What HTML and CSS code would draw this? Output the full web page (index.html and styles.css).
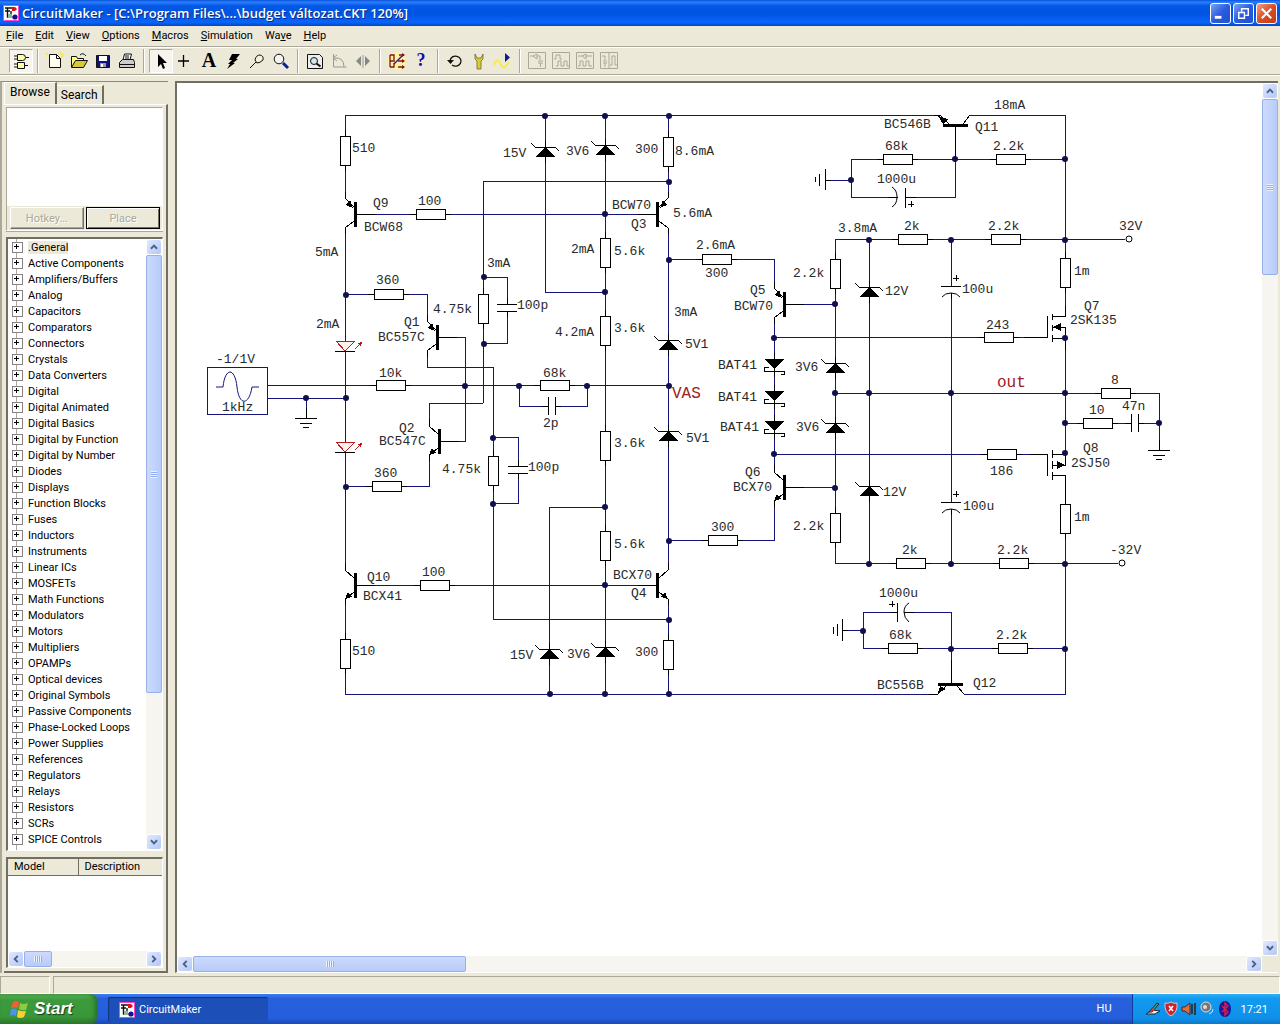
FILE: index.html
```html
<!DOCTYPE html>
<html lang="en">
<head>
<meta charset="utf-8">
<title>CircuitMaker - budget változat.CKT</title>
<link rel="stylesheet" href="styles.css">
</head>
<body>
<svg class="defs" aria-hidden="true">
  <defs>
    <symbol id="app" viewBox="0 0 16 16">
      <rect width="16" height="16" fill="#fff"/><rect x=".5" y=".5" width="15" height="15" fill="none" stroke="#f4c"/>
      <path d="M2 3h8M2 6h5M4.500 3v9h5M8 6v3" stroke="#111" fill="none" stroke-width="1.400"/>
      <path d="M9 2h3l2 2-2 2H9z" fill="#d11"/><circle cx="12" cy="12" r="2.600" fill="#118"/><path d="M5 9h4v4H5z" fill="#8cb89a"/>
    </symbol>
    <symbol id="a-up" viewBox="0 0 16 16"><path d="M4.500 10L8 6.500l3.500 3.500" fill="none" stroke="#4d6185" stroke-width="2.200"/></symbol>
    <symbol id="a-down" viewBox="0 0 16 16"><path d="M4.500 6L8 9.500 11.500 6" fill="none" stroke="#4d6185" stroke-width="2.200"/></symbol>
    <symbol id="a-left" viewBox="0 0 16 16"><path d="M10 4.500L6.500 8l3.500 3.500" fill="none" stroke="#4d6185" stroke-width="2.200"/></symbol>
    <symbol id="a-right" viewBox="0 0 16 16"><path d="M6 4.500L9.500 8 6 11.500" fill="none" stroke="#4d6185" stroke-width="2.200"/></symbol>
  </defs>
</svg>

<header class="titlebar">
  <svg class="app-icon" aria-hidden="true"><use href="#app"/></svg>
  <h1>CircuitMaker - [C:\Program Files\...\budget változat.CKT 120%]</h1>
  <div class="window-buttons">
    <button aria-label="Minimize"><svg viewBox="0 0 20 20"><path d="M4 14h7" stroke="#fff" stroke-width="3"/></svg></button>
    <button aria-label="Restore"><svg viewBox="0 0 20 20"><path d="M8 8V5h7v7h-3M5 9h6v6H5z" fill="none" stroke="#fff" stroke-width="1.500"/></svg></button>
    <button class="close" aria-label="Close"><svg viewBox="0 0 20 20"><path d="M5 5l10 10M15 5L5 15" stroke="#fff" stroke-width="2.200"/></svg></button>
  </div>
</header>

<nav class="menubar">
  <button><u>F</u>ile</button><button><u>E</u>dit</button><button><u>V</u>iew</button><button><u>O</u>ptions</button><button><u>M</u>acros</button><button><u>S</u>imulation</button><button>Wa<u>v</u>e</button><button><u>H</u>elp</button>
</nav>

<div class="toolbar" role="toolbar">
  <button class="on" aria-label="Parts panel"><svg viewBox="0 0 20 20"><g fill="#ffffa8" stroke="#111"><path d="M6.500 3.500h5q3 0 3 3t-3 3h-5zM6.500 11.500h7v6h-7z"/></g><path d="M3 5h3M3 8h3M15 6.500h3M3 13h3M3 16h3M14 14.500h3" stroke="#111"/></svg></button>
  <span class="sep"></span>
  <button aria-label="New"><svg viewBox="0 0 20 20"><path d="M14 1l4 3-2 3M3 2l-2 2" fill="none" stroke="#ee5" stroke-width="2"/><path d="M4.500 3.500h7l4 4v9h-11z" fill="#fffff0" stroke="#111"/><path d="M11.500 3.500v4h4" fill="none" stroke="#111"/></svg></button>
  <button aria-label="Open"><svg viewBox="0 0 20 20"><path d="M2.500 16V5.500h5l1 2h6V10" fill="#ffff80" stroke="#111"/><path d="M2.500 16.500l4-7h12l-4 7z" fill="#d8c83c" stroke="#111"/><path d="M11 4q3-3 6 1" fill="none" stroke="#111"/></svg></button>
  <button aria-label="Save"><svg viewBox="0 0 20 20"><path d="M3.500 4.500h13v12h-13z" fill="#10107a" stroke="#111"/><path d="M6 5h8v5H6z" fill="#fff"/><path d="M7 12h6v4H7z" fill="#999"/><path d="M8 13h2v3H8z" fill="#fff"/></svg></button>
  <button aria-label="Print"><svg viewBox="0 0 20 20"><path d="M6 9l1.500-6h7L13 9" fill="#fff" stroke="#111"/><path d="M8 5h4M8 7h4" stroke="#111"/><path d="M2.500 11.500l3-3h11l1 3v5h-15z" fill="#ccc" stroke="#111"/><path d="M3 13.500h14" stroke="#111"/></svg></button>
  <span class="sep"></span>
  <button class="on" aria-label="Select"><svg viewBox="0 0 20 20"><path d="M7 3v13l3-3 2 5 2-1-2-5h4z" fill="#000"/></svg></button>
  <button aria-label="Wire"><svg viewBox="0 0 20 20"><path d="M3 10h11M8.500 4v12" stroke="#000" stroke-width="1.300"/></svg></button>
  <button aria-label="Text" class="glyph">A</button>
  <button aria-label="Delete"><svg viewBox="0 0 20 20"><path d="M9 3h8l-4 5h2l-5 4h2l-8 6 3-5H5l4-4H6z" fill="#000"/></svg></button>
  <button aria-label="Probe"><svg viewBox="0 0 20 20"><path d="M3 17l6-6M8 9q1-5 5-5 4 1 3 5-3 3-6 3z" fill="#f4f0dc" stroke="#111"/></svg></button>
  <button aria-label="Zoom"><svg viewBox="0 0 20 20"><circle cx="8" cy="8" r="4.800" fill="#f4f4f0" stroke="#111"/><path d="M12 12l5 5" stroke="#102090" stroke-width="3"/></svg></button>
  <span class="sep"></span>
  <button aria-label="Fit"><svg viewBox="0 0 20 20"><path d="M2.500 3.500h12l3 3v11h-15z" fill="#eee" stroke="#111"/><circle cx="9" cy="10" r="3.500" fill="#cfe8e8" stroke="#111"/><path d="M11.500 12.500l4 3" stroke="#111" stroke-width="2"/></svg></button>
  <button aria-label="Rotate" disabled><svg viewBox="0 0 20 20"><g fill="none" stroke="#999"><path d="M4.500 3v13h13M4 7l4-3M4 7l4 3M5 7q10-1 10 9"/></g></svg></button>
  <button aria-label="Mirror" disabled><svg viewBox="0 0 20 20"><path d="M8 5v10l-5-5zM12 5v10l5-5z" fill="#888"/><path d="M10 4v13" stroke="#999"/></svg></button>
  <span class="sep"></span>
  <button aria-label="Digital options"><svg viewBox="0 0 20 20"><circle cx="10" cy="10" r="9" fill="#fff3a0"/><path d="M3 4h4v5M3 16h4v-4M3 4v12M3 10h5M11 16h6M11 10h6M12 4h5" fill="none" stroke="#811" stroke-width="1.300"/><path d="M7 13l8-8" stroke="#22a" stroke-width="1.500"/><path d="M15 2l3 2-3 2zM15 8l3 2-3 2zM15 14l3 2-3 2z" fill="#811"/></svg></button>
  <button aria-label="Help" class="glyph help">?</button>
  <span class="sep"></span>
  <button aria-label="Reset"><svg viewBox="0 0 20 20"><path d="M5 10a5.500 5 0 1 1 2 4" fill="none" stroke="#111" stroke-width="1.300"/><path d="M2 9h7l-3.500 4z" fill="#111"/></svg></button>
  <button aria-label="Step"><svg viewBox="0 0 20 20"><path d="M6 3v5l2 2v8h4v-8l2-2V3l-2 4H8z" fill="#d8d020" stroke="#665" stroke-width=".8"/></svg></button>
  <button aria-label="Run"><svg viewBox="0 0 20 20"><path d="M1 14q3-8 6-2t5 4l4-5" fill="none" stroke="#f4ec50" stroke-width="2"/><path d="M12 2v9l5-4.500z" fill="#102080"/></svg></button>
  <span class="sep"></span>
  <button aria-label="Trace" disabled><svg viewBox="0 0 20 20"><g fill="none" stroke="#aaa897"><path d="M1.500 1.500h17v16h-17zM3 5h3l4-2v5L6 5M10 5h3v4M11 10h5M11 12h5M13.500 12v4"/></g></svg></button>
  <button aria-label="Waveform" disabled><svg viewBox="0 0 20 20"><g fill="none" stroke="#aaa897"><path d="M1.500 1.500h17v16h-17zM3 8h2V4h4v4h2M5 15h2v-5h3v5h3v-5h3v5h2"/></g></svg></button>
  <button aria-label="Both" disabled><svg viewBox="0 0 20 20"><g fill="none" stroke="#aaa897"><path d="M1.500 1.500h17v16h-17zM3 5h4l4-2v5L7 5M11 5h6M3 15h2v-5h3v5h3v-5h3v5h3"/></g></svg></button>
  <button aria-label="Split" disabled><svg viewBox="0 0 20 20"><g fill="none" stroke="#aaa897"><path d="M1.500 1.500h17v16h-17zM10 2v16M3 5h3v4M4 10h4M4 12h4M6 12v4M11 14h2V5h3v9h2"/></g></svg></button>
</div>

<main class="workspace">
  <aside class="panel">
    <div class="tabs" role="tablist">
      <button class="active" role="tab">Browse</button><button role="tab">Search</button>
    </div>
    <div class="panel-body">
      <section class="preview">
        <div class="preview-view"></div>
        <div class="preview-actions"><button disabled>Hotkey...</button><button class="default" disabled>Place</button></div>
      </section>
      <section class="tree-box">
        <ul class="tree">
          <li><span class="selected">.General</span></li><li>Active Components</li><li>Amplifiers/Buffers</li><li>Analog</li><li>Capacitors</li><li>Comparators</li><li>Connectors</li><li>Crystals</li><li>Data Converters</li><li>Digital</li><li>Digital Animated</li><li>Digital Basics</li><li>Digital by Function</li><li>Digital by Number</li><li>Diodes</li><li>Displays</li><li>Function Blocks</li><li>Fuses</li><li>Inductors</li><li>Instruments</li><li>Linear ICs</li><li>MOSFETs</li><li>Math Functions</li><li>Modulators</li><li>Motors</li><li>Multipliers</li><li>OPAMPs</li><li>Optical devices</li><li>Original Symbols</li><li>Passive Components</li><li>Phase-Locked Loops</li><li>Power Supplies</li><li>References</li><li>Regulators</li><li>Relays</li><li>Resistors</li><li>SCRs</li><li>SPICE Controls</li><li>Schematic Symbols</li>
        </ul>
        <div class="scroll vertical">
          <button aria-label="Scroll up"><svg><use href="#a-up"/></svg></button>
          <div class="thumb tree-thumb"></div><div class="track"></div>
          <button aria-label="Scroll down"><svg><use href="#a-down"/></svg></button>
        </div>
      </section>
      <section class="models">
        <table><thead><tr><th class="col-model">Model</th><th>Description</th></tr></thead></table>
        <div class="models-space"></div>
        <div class="scroll horizontal">
          <button aria-label="Scroll left"><svg><use href="#a-left"/></svg></button>
          <div class="thumb models-thumb"></div><div class="track"></div>
          <button aria-label="Scroll right"><svg><use href="#a-right"/></svg></button>
        </div>
      </section>
    </div>
  </aside>

  <section class="document">
    <div class="sheet">
<svg class="schematic" width="1084" height="872" viewBox="177 83 1084 872" role="img" aria-label="Amplifier schematic">
  <defs>
    <g id="rv"><path class="lead" d="M0 -21V20"/><rect class="body" x="-5" y="-15" width="10" height="29"/></g>
    <g id="rh"><path class="lead" d="M-21 0H20"/><rect class="body" x="-15" y="-5" width="29" height="10"/></g>
    <g id="z"><path class="lead" d="M0 -6V16"/><path class="thin" d="M-14 -4L-10 0H10L14 4"/><path class="solid" d="M0 0L10 10H-10Z"/></g>
    <g id="s"><path class="lead" d="M0 -6V18"/><path class="solid" d="M-10 0H10L0 10Z"/><path class="thin" d="M-5 8H-10V12H10V15H7"/></g>
    <g id="led"><path class="red" d="M-9 0H10L0 10ZM10 8L16 2"/><path class="redfill" d="M12 2L17 1L16 6Z"/><path class="lead" d="M-10 10H10"/></g>
    <g id="pnp"><path class="solid" d="M9 -12H12V13H9Z"/><path class="lead" d="M12 0H30M0 -22V-16M0 14V20"/><path class="thin" d="M0 -16L9 -7M9 7L0 14"/><path class="solid" d="M8 -6L1 -9L5 -14Z"/></g>
    <g id="npn"><path class="solid" d="M9 -12H12V13H9Z"/><path class="lead" d="M12 0H30M0 -22V-15M0 14V20"/><path class="thin" d="M0 -15L9 -7M9 7L0 14"/><path class="solid" d="M0 14L3 7L7 12Z"/></g>
    <g id="gnd"><path class="lead" d="M0 -10V0M-11 0H11M-6 5H6M-3 9H3"/></g>
    <g id="cv"><rect class="gap" x="-9" y="0" width="19" height="7"/><path class="lead" d="M-10 0H10M-10 7H10M0 -6V0M0 7V13"/></g>
    <g id="ch"><rect class="gap" x="0" y="-9" width="7" height="18"/><path class="lead" d="M0 -9V9M7 -9V9M-6 0H0M7 0H13"/></g>
    <g id="pol"><rect class="gap" x="-9" y="0" width="19" height="7"/><path class="lead" d="M-10 0H10M0 7V13M2 -8H8M5 -11V-5"/><path class="curve" d="M-9 11Q-6 7 0 7T9 11"/></g>
  </defs>

  <!-- wires -->
  <path class="wire" d="M345 605V694H936M345 565V234M345 192V115H940M970 115H1065V694H964
    M356 214H657M483 403V181H668M545 115V292H605M605 115V694M668 115V192M668 234V563M668 605V694
    M345 294H427V315M356 585H657M427 357V367H493V619H668M484 277H507V343H484M439 337H465V441H441
    M267 385H668M267 398H345M306 398V418M483 403H429V419M429 461V486H345M493 437H518V503H493
    M519 385V406H587V385M605 507H549V694M668 259H774V282M774 324V465M774 507V540H668
    M785 304H835M785 487H835M774 337H1047M774 454H1047M835 393H1159V450
    M1125 239H835V563H1118M869 239V563M951 239V563M1065 423H1159
    M851 159H1065M851 159V197H955V127M825 180H851M863 612H951V684M863 612V648H1065M842 630H863"/>

  <!-- resistors -->
  <use href="#rv" x="345" y="151"/><use href="#rv" x="345" y="654"/><use href="#rv" x="483" y="309"/><use href="#rv" x="493" y="471"/>
  <use href="#rv" x="605" y="253"/><use href="#rv" x="605" y="331"/><use href="#rv" x="605" y="446"/><use href="#rv" x="605" y="546"/>
  <use href="#rv" x="668" y="152"/><use href="#rv" x="668" y="655"/><use href="#rv" x="835" y="274"/><use href="#rv" x="835" y="528"/>
  <use href="#rv" x="1065" y="273"/><use href="#rv" x="1065" y="519"/>
  <use href="#rh" x="431" y="214"/><use href="#rh" x="389" y="294"/><use href="#rh" x="391" y="385"/><use href="#rh" x="387" y="486"/>
  <use href="#rh" x="435" y="585"/><use href="#rh" x="555" y="385"/><use href="#rh" x="717" y="259"/><use href="#rh" x="723" y="540"/>
  <use href="#rh" x="898" y="159"/><use href="#rh" x="1011" y="159"/><use href="#rh" x="913" y="239"/><use href="#rh" x="1006" y="239"/>
  <use href="#rh" x="999" y="337"/><use href="#rh" x="1002" y="454"/><use href="#rh" x="1116" y="393"/><use href="#rh" x="1098" y="423"/>
  <use href="#rh" x="911" y="563"/><use href="#rh" x="1014" y="563"/><use href="#rh" x="903" y="648"/><use href="#rh" x="1013" y="648"/>

  <!-- diodes -->
  <use href="#z" x="545" y="147"/><use href="#z" x="605" y="145"/><use href="#z" x="668" y="340"/><use href="#z" x="668" y="431"/>
  <use href="#z" x="549" y="649"/><use href="#z" x="605" y="647"/><use href="#z" x="835" y="363"/><use href="#z" x="835" y="423"/>
  <use href="#z" x="869" y="287"/><use href="#z" x="869" y="486"/>
  <use href="#s" x="774" y="359"/><use href="#s" x="774" y="391"/><use href="#s" x="774" y="421"/>
  <use href="#led" x="345" y="341"/><use href="#led" x="345" y="442"/>

  <!-- transistors -->
  <use href="#pnp" x="345" y="214"/><use href="#pnp" x="427" y="337"/><use href="#pnp" x="774" y="304"/>
  <use href="#npn" x="429" y="441"/><use href="#npn" x="345" y="585"/><use href="#npn" x="774" y="487"/>
  <use href="#pnp" transform="translate(668 214) scale(-1 1)"/><use href="#npn" transform="translate(668 585) scale(-1 1)"/>
  <path class="solid" d="M943 124H968V127H943ZM938 116L948 119L943 124ZM938 683H963V686H938ZM938 693L940 686L946 689Z"/>
  <path class="thin" d="M934 115H940L949 124M963 124L970 115M955 127V159M929 694H938L946 686M957 686L964 694M951 660V683"/>

  <!-- power transistors -->
  <path class="knock" d="M1065 317V337M1065 455V475"/>
  <path class="lead" d="M1047 316V337H1024M1052 314V320M1052 325V331M1052 335V342M1052 316H1065V306M1052 327H1065V350M1052 338H1065
    M1030 454H1047V476M1052 450V458M1052 461V469M1052 472V480M1052 454H1065V465H1052M1052 475H1065V500"/>
  <path class="solid" d="M1053 327L1061 323V331ZM1065 465L1057 461V469Z"/>

  <!-- capacitors and grounds -->
  <use href="#cv" x="507" y="304"/><use href="#cv" x="518" y="466"/><use href="#ch" x="548" y="406"/><use href="#ch" x="1131" y="423"/>
  <use href="#pol" x="951" y="286"/><use href="#pol" x="951" y="502"/>
  <rect class="gap" x="898" y="188" width="7" height="18"/><rect class="gap" x="897" y="604" width="7" height="17"/>
  <path class="lead" d="M905 188V208M888 197H898M905 197H916M908 204H914M911 201V207M897 603V622M891 612H897M904 612H914M889 604H895M892 601V607"/>
  <path class="curve" d="M892 187Q897 190 897 197T892 207M909 603Q904 606 904 612T909 622"/>
  <use href="#gnd" x="306" y="418"/><use href="#gnd" x="1159" y="450"/>
  <path class="lead" d="M831 180H825M825 169V190M819 174V186M815 177V182M848 630H842M842 619V641M837 624V636M833 627V634"/>

  <!-- generator and supply terminals -->
  <rect class="source" x="207" y="367" width="60" height="47"/>
  <path class="sine" d="M216 387H223C225 367 235 367 237 387C239 406 249 406 252 387H259"/>
  <circle class="terminal" cx="1129" cy="239" r="3"/><circle class="terminal" cx="1122" cy="563" r="3"/>

  <!-- junctions -->
  <path class="dots" d="M545 116h0M605 116h0M669 116h0M669 182h0M605 214h0M605 292h0M669 260h0M346 295h0M484 277h0M484 344h0M465 386h0M519 386h0M587 386h0M669 386h0M306 398h0M346 398h0M346 487h0M493 438h0M493 504h0M605 507h0M669 541h0M605 585h0M669 620h0M550 694h0M605 694h0M669 694h0M774 338h0M774 454h0M835 304h0M835 393h0M835 488h0M869 240h0M869 393h0M869 564h0M951 240h0M951 393h0M951 564h0M955 159h0M1065 159h0M851 180h0M1065 240h0M1065 338h0M1065 393h0M1065 423h0M1159 423h0M1065 453h0M1065 564h0M863 631h0M951 649h0M1065 649h0"/>

  <g class="labels">
    <text x="352" y="152">510</text><text x="373" y="207">Q9</text><text x="364" y="231">BCW68</text><text x="418" y="205">100</text>
    <text x="315" y="256">5mA</text><text x="376" y="284">360</text><text x="404" y="326">Q1</text><text x="378" y="341">BC557C</text>
    <text x="316" y="328">2mA</text><text x="433" y="313">4.75k</text><text x="487" y="267">3mA</text><text x="517" y="309">100p</text>
    <text x="216" y="363">-1/1V</text><text x="222" y="411">1kHz</text><text x="379" y="377">10k</text><text x="399" y="432">Q2</text>
    <text x="379" y="445">BC547C</text><text x="374" y="477">360</text><text x="442" y="473">4.75k</text><text x="528" y="471">100p</text>
    <text x="367" y="581">Q10</text><text x="363" y="600">BCX41</text><text x="422" y="576">100</text><text x="352" y="655">510</text>
    <text x="503" y="157">15V</text><text x="566" y="155">3V6</text><text x="635" y="153">300</text><text x="675" y="155">8.6mA</text>
    <text x="612" y="209">BCW70</text><text x="631" y="228">Q3</text><text x="673" y="217">5.6mA</text><text x="571" y="253">2mA</text>
    <text x="614" y="255">5.6k</text><text x="555" y="336">4.2mA</text><text x="614" y="332">3.6k</text><text x="696" y="249">2.6mA</text>
    <text x="705" y="277">300</text><text x="674" y="316">3mA</text><text x="685" y="348">5V1</text><text x="543" y="377">68k</text>
    <text x="543" y="427">2p</text><text x="614" y="447">3.6k</text><text x="686" y="442">5V1</text><text x="614" y="548">5.6k</text>
    <text x="613" y="579">BCX70</text><text x="631" y="597">Q4</text><text x="711" y="531">300</text><text x="635" y="656">300</text>
    <text x="510" y="659">15V</text><text x="567" y="658">3V6</text><text x="750" y="294">Q5</text><text x="734" y="310">BCW70</text>
    <text x="718" y="369">BAT41</text><text x="718" y="401">BAT41</text><text x="720" y="431">BAT41</text><text x="745" y="476">Q6</text>
    <text x="733" y="491">BCX70</text><text x="793" y="277">2.2k</text><text x="795" y="371">3V6</text><text x="796" y="431">3V6</text>
    <text x="793" y="530">2.2k</text><text x="885" y="295">12V</text><text x="883" y="496">12V</text><text x="838" y="232">3.8mA</text>
    <text x="884" y="128">BC546B</text><text x="975" y="131">Q11</text><text x="994" y="109">18mA</text><text x="885" y="150">68k</text>
    <text x="993" y="150">2.2k</text><text x="877" y="183">1000u</text><text x="904" y="230">2k</text><text x="988" y="230">2.2k</text>
    <text x="1119" y="230">32V</text><text x="1074" y="275">1m</text><text x="1084" y="310">Q7</text><text x="1070" y="324">2SK135</text>
    <text x="986" y="329">243</text><text x="962" y="293">100u</text><text x="1111" y="384">8</text><text x="1089" y="414">10</text>
    <text x="1122" y="410">47n</text><text x="1083" y="452">Q8</text><text x="1071" y="467">2SJ50</text><text x="990" y="475">186</text>
    <text x="963" y="510">100u</text><text x="1074" y="521">1m</text><text x="902" y="554">2k</text><text x="997" y="554">2.2k</text>
    <text x="1110" y="554">-32V</text><text x="879" y="597">1000u</text><text x="889" y="639">68k</text><text x="996" y="639">2.2k</text>
    <text x="877" y="689">BC556B</text><text x="973" y="687">Q12</text>
    <text class="net" x="672" y="398">VAS</text><text class="net" x="997" y="387">out</text>
  </g>
</svg>
    </div>
    <div class="scroll vertical">
      <button aria-label="Scroll up"><svg><use href="#a-up"/></svg></button>
      <div class="thumb doc-v-thumb"></div><div class="track"></div>
      <button aria-label="Scroll down"><svg><use href="#a-down"/></svg></button>
    </div>
    <div class="scroll horizontal">
      <button aria-label="Scroll left"><svg><use href="#a-left"/></svg></button>
      <div class="thumb doc-h-thumb"></div><div class="track"></div>
      <button aria-label="Scroll right"><svg><use href="#a-right"/></svg></button>
    </div>
    <div class="corner"></div>
  </section>
</main>

<div class="statusbar"><span class="status-cell small"></span><span class="status-cell"></span></div>

<footer class="taskbar">
  <button class="start"><svg viewBox="0 0 20 20" aria-hidden="true"><path d="M4 3q3-2 6 0L9 9Q6 8 2 9z" fill="#f06030"/><path d="M11 4q3 2 8 0l-2 7q-4 1-7-1z" fill="#8ccc40"/><path d="M2 10q3-1 6 0l-1 7q-3-2-6 0z" fill="#5090f0"/><path d="M9 11q4 2 8 1l-2 6q-4 2-7 0z" fill="#fcd030"/></svg>Start</button>
  <button class="task"><svg aria-hidden="true"><use href="#app"/></svg>CircuitMaker</button>
  <span class="lang">HU</span>
  <div class="tray">
    <svg viewBox="0 0 16 16"><path d="M1 13h9l5-3-8-1z" fill="#eee" stroke="#222"/><path d="M4 11L12 2l2 1-7 8z" fill="#3a6" stroke="#223"/><path d="M4 12l4-5 2 2z" fill="#e33"/></svg>
    <svg viewBox="0 0 16 16"><path d="M8 1q3 2 6 1 1 9-6 13Q1 11 2 2q3 1 6-1z" fill="#d02030" stroke="#ccc"/><path d="M6 5l4 5M10 5l-4 5" stroke="#fff" stroke-width="1.500"/></svg>
    <svg viewBox="0 0 16 16"><path d="M1 6h3l5-4v12l-5-4H1z" fill="#e07038" stroke="#522"/><path d="M11 3v10M14 2v12" stroke="#222" stroke-width="1.500"/></svg>
    <svg viewBox="0 0 16 16"><circle cx="7" cy="6" r="5" fill="#777" stroke="#ddd"/><circle cx="6" cy="6" r="2" fill="#ddd"/><path d="M10 13q4-1 4-5" fill="none" stroke="#ddd"/></svg>
    <svg viewBox="0 0 16 16"><ellipse cx="8" cy="8" rx="6" ry="8" fill="#1818a0"/><path d="M5 5l6 6-3 3V2l3 3-6 6" fill="none" stroke="#e02040" stroke-width="1.400"/></svg>
    <time>17:21</time>
  </div>
</footer>
</body>
</html>
```
FILE: styles.css
```css
* { box-sizing: border-box; }
body {
  margin: 0;
  height: 100vh;
  display: flex;
  flex-direction: column;
  overflow: hidden;
  background: #ece9d8;
  color: #000;
  font: 11px Roboto, Arial, sans-serif;
}
button { margin: 0; padding: 0; border: 0; background: none; font: inherit; color: inherit; }
svg { display: block; flex: none; }
.defs { position: absolute; width: 0; height: 0; }

/* title bar */
.titlebar {
  display: flex;
  align-items: center;
  flex: none;
  height: 26px;
  padding: 0 3px;
  background: linear-gradient(#0a50d8, #2a80ff 8%, #0458e4 22%, #0054e3 55%, #0866fc 85%, #0347c0);
}
.app-icon { width: 16px; height: 16px; }
.titlebar h1 {
  flex: 1;
  margin: 0 0 0 3px;
  color: #fff;
  font: 600 13px "Open Sans", sans-serif;
  text-shadow: 1px 1px #0a2a80;
  white-space: nowrap;
}
.window-buttons { display: flex; gap: 2px; }
.window-buttons button {
  width: 21px;
  height: 21px;
  border: 1px solid #fff;
  border-radius: 3px;
  background: linear-gradient(135deg, #7ba2f0, #2a5ce0 50%, #2050cc);
}
.window-buttons .close { background: linear-gradient(135deg, #f0a088, #dc4c24 50%, #c03c18); }

/* menu and toolbar */
.menubar {
  display: flex;
  flex: none;
  height: 20px;
  line-height: 18px;
}
.menubar button { padding: 0 6px; }
.toolbar {
  display: flex;
  align-items: center;
  flex: none;
  height: 29px;
  padding: 0 9px;
  border-top: 1px solid #aca899;
  border-bottom: 1px solid #aca899;
  box-shadow: inset 0 1px #fff, 0 1px #fff;
}
.toolbar button { display: flex; align-items: center; justify-content: center; width: 24px; height: 24px; }
.toolbar svg { width: 20px; height: 20px; }
.toolbar .on { background: #f6f4ec; border: 1px solid; border-color: #aca899 #fff #fff #aca899; }
.toolbar .sep { width: 2px; height: 24px; margin: 0 4px; border-left: 1px solid #aca899; border-right: 1px solid #fff; }
.toolbar .glyph { font: bold 20px "Liberation Serif", serif; }
.toolbar .help { color: #1010b0; font-size: 18px; }

/* workspace */
.workspace { display: flex; flex: 1; min-height: 0; gap: 7px; padding: 6px 2px 3px 0; }
.panel {
  display: flex;
  flex-direction: column;
  flex: none;
  width: 168px;
  padding-left: 2px;
  border-top: 1px solid #8c8a7c;
  border-left: 2px solid #aca899;
}
.tabs { display: flex; align-items: flex-end; height: 22px; font-size: 12px; }
.tabs button { height: 19px; padding: 0 4px; border-right: 2px solid #716f64; border-top: 1px solid #fff; }
.tabs .active { height: 22px; padding: 0 5px 3px; border-left: 1px solid #fff; }
.panel-body {
  display: flex;
  flex-direction: column;
  flex: 1;
  min-height: 0;
  gap: 6px;
  padding: 2px 3px 3px 2px;
  border-top: 1px solid #fff;
  border-right: 2px solid #716f64;
  border-bottom: 2px solid #716f64;
}
.preview { flex: none; border: 1px solid; border-color: #aca899 #fff #fff #aca899; box-shadow: 0 1px #aca899; }
.preview-view { height: 98px; background: #fff; }
.preview-actions { display: flex; gap: 2px; padding: 1px 2px 1px 3px; }
.preview-actions button {
  flex: 1;
  height: 22px;
  border: 1px solid;
  border-color: #fff #716f64 #716f64 #fff;
  box-shadow: inset -1px -1px #aca899;
  color: #aca899;
  text-shadow: 1px 1px #fff;
}
.preview-actions .default { border-color: #000; box-shadow: inset 1px 1px #fff, inset -1px -1px #716f64; }
.tree-box {
  display: flex;
  flex: 1;
  min-height: 0;
  overflow: hidden;
  border: 1px solid #fff;
  border-top: 2px solid #716f64;
  border-left: 2px solid #716f64;
  background: #fff;
}
.tree { flex: 1; margin: 0; padding: 0 0 0 4px; list-style: none; overflow: hidden; white-space: nowrap; }
.tree li { display: flex; align-items: center; gap: 5px; height: 16px; background: linear-gradient(#aca899, #aca899) 4px 0 / 1px 100% no-repeat; }
.tree li::before {
  content: "";
  width: 9px;
  height: 9px;
  border: 1px solid #848284;
  background: linear-gradient(#000, #000) 1px 3px / 5px 1px no-repeat, linear-gradient(#000, #000) 3px 1px / 1px 5px no-repeat, #fff;
}
.tree .selected { background: #ece9d8; }
.models {
  display: flex;
  flex-direction: column;
  flex: none;
  height: 111px;
  border: 1px solid #fff;
  border-top: 2px solid #716f64;
  border-left: 2px solid #716f64;
  background: #fff;
}
.models table { width: 100%; border-collapse: collapse; }
.models th {
  height: 16px;
  padding: 0 6px;
  border-bottom: 1px solid #716f64;
  background: #ece9d8;
  font-weight: normal;
  text-align: left;
}
.models .col-model { width: 70px; border-right: 1px solid #716f64; }
.models-space { flex: 1; }

/* scroll bars */
.scroll { display: flex; flex: none; background: #f6f5f0; }
.scroll.vertical { flex-direction: column; width: 16px; }
.scroll.horizontal { height: 16px; }
.scroll button {
  flex: none;
  width: 16px;
  height: 16px;
  border: 1px solid #fff;
  border-radius: 3px;
  background: linear-gradient(135deg, #dfe8ff, #b4c8f6);
}
.scroll button svg { width: 14px; height: 14px; }
.track { flex: 1; }
.thumb {
  display: flex;
  align-items: center;
  justify-content: center;
  flex: none;
  border: 1px solid #98b0e8;
  border-radius: 2px;
}
.vertical .thumb { background: linear-gradient(90deg, #cddafe, #b8cbf8); }
.horizontal .thumb { background: linear-gradient(#cddafe, #b8cbf8); }
.thumb::after { content: ""; display: block; }
.vertical .thumb::after { width: 6px; height: 7px; background: repeating-linear-gradient(#eef4fe 0 1px, #8cb0f8 1px 2px); }
.horizontal .thumb::after { width: 8px; height: 6px; background: repeating-linear-gradient(90deg, #eef4fe 0 1px, #8cb0f8 1px 2px); }
.tree-thumb { height: 438px; }
.models-thumb { width: 28px; }
.doc-v-thumb { height: 176px; }
.doc-h-thumb { width: 273px; }

/* document */
.document {
  display: grid;
  grid-template: minmax(0, 1fr) 16px / minmax(0, 1fr) 16px;
  flex: 1;
  min-width: 0;
  border-top: 2px solid #716f64;
  border-left: 2px solid #716f64;
  border-bottom: 1px solid #fff;
  background: #fff;
}
.sheet { overflow: hidden; background: #fff; }
.corner { background: #ece9d8; }
.schematic path, .schematic rect { shape-rendering: crispEdges; }
.wire, .source, .sine { fill: none; stroke: #14147c; }
.schematic .sine, .schematic .curve, .schematic .dots { shape-rendering: auto; }
.lead, .thin, .curve { fill: none; stroke: #000; }
.body, .terminal { fill: #fff; stroke: #000; }
.solid { fill: #000; }
.gap { fill: #fff; }
.knock { fill: none; stroke: #fff; stroke-width: 3; }
.red { fill: #fff0f0; stroke: #b82020; }
.redfill { fill: #c01020; }
.dots { fill: none; stroke: #10104c; stroke-width: 6; stroke-linecap: round; }
.labels { fill: #2a2a2a; font: 13px "Liberation Mono", "Courier New", monospace; }
.labels .net { fill: #a02020; font-size: 16px; }

/* status bar */
.statusbar { display: flex; flex: none; gap: 3px; height: 18px; }
.status-cell { flex: 1; border: 1px solid; border-color: #aca899 #fff #fff #aca899; }
.status-cell.small { flex: none; width: 50px; }

/* task bar */
.taskbar {
  display: flex;
  align-items: stretch;
  flex: none;
  height: 30px;
  background: linear-gradient(#3a80f0, #2860dc 15%, #245edc 80%, #1c48b4);
  color: #fff;
}
.start {
  display: flex;
  align-items: center;
  gap: 5px;
  width: 98px;
  padding-left: 9px;
  border-radius: 0 8px 8px 0;
  background: linear-gradient(#5cb85c, #3c9a3c 20%, #3a963a 75%, #2a7a2a);
  box-shadow: inset -3px 0 4px #2a702a;
  font: italic bold 17px "Liberation Sans", sans-serif;
  text-shadow: 1px 1px 1px #143c14;
}
.start svg { width: 20px; height: 20px; }
.task {
  display: flex;
  align-items: center;
  gap: 4px;
  width: 160px;
  margin: 3px 0 2px 10px;
  padding-left: 11px;
  border-radius: 2px;
  background: #1c4fb8;
  box-shadow: inset 1px 1px 1px #10347c;
}
.task svg { width: 16px; height: 16px; }
.lang { margin-left: auto; padding-right: 20px; line-height: 30px; }
.tray {
  display: flex;
  align-items: center;
  gap: 2px;
  padding: 0 12px;
  border-left: 1px solid #0c3c94;
  background: linear-gradient(#30b0f8, #129aee 15%, #0f90ea 80%, #0c78c8);
}
.tray svg { width: 16px; height: 16px; }
.tray time { margin-left: 6px; }
```
